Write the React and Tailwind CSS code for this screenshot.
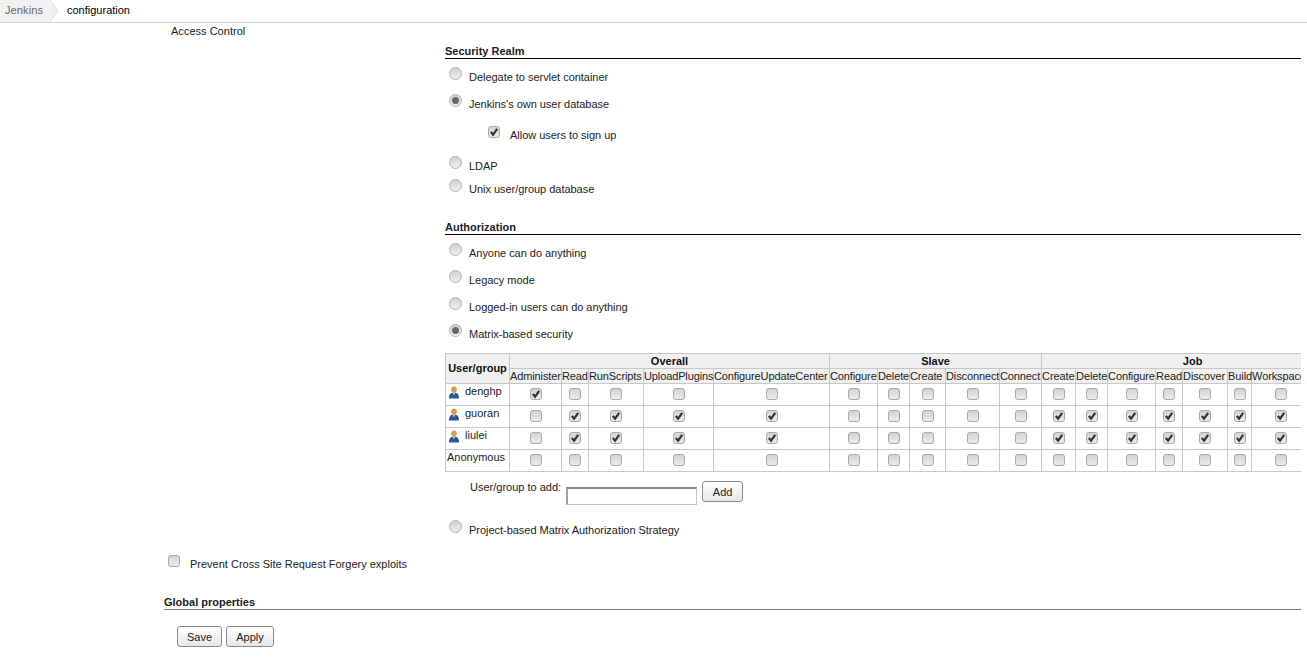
import React from 'react'

const slaveHead = ['Configure', 'Delete', 'Create', 'Disconnect', 'Connect']
// last column runs past the right edge of the page, only Job's centering depends on it
const jobHead = ['Create', 'Delete', 'Configure', 'Read', 'Discover', 'Build', 'Workspace', '']
const overallHead = ['Administer', 'Read', 'RunScripts', 'UploadPlugins', 'ConfigureUpdateCenter']
const colWidths = [64, 52, 27, 55, 70, 116, 48, 32, 36, 54, 42, 34, 32, 48, 27, 45, 24, 58, 34]

const nonAdmin = [0, 1, 1, 1, 1, 0, 0, 0, 0, 0, 1, 1, 1, 1, 1, 1, 1, 1]
const users = [
  { name: 'denghp', icon: true, perms: [1, 0, 0, 0, 0, 0, 0, 0, 0, 0, 0, 0, 0, 0, 0, 0, 0, 0] },
  { name: 'guoran', icon: true, perms: nonAdmin },
  { name: 'liulei', icon: true, perms: nonAdmin },
  { name: 'Anonymous', icon: false, perms: Array(18).fill(0) },
]

const Check = ({ checked }) => (
  <span className="inline-flex h-[12px] w-[12px] items-center justify-center rounded-[3px] border border-[#a9a9a9] bg-gradient-to-b from-[#d2d2d2] to-[#ececec]">
    {checked ? (
      <svg width="10" height="10" viewBox="0 0 11 11">
        <path d="M2 5.5 L4.5 8.5 L9 2" fill="none" stroke="#333" strokeWidth="2.4" />
      </svg>
    ) : null}
  </span>
)

const Radio = ({ checked }) => (
  <span className="mb-[7px] inline-flex h-[13px] w-[13px] items-center justify-center rounded-full border border-[#b0b0b0] bg-gradient-to-b from-[#d0d0d0] to-[#f0f0f0]">
    {checked ? <span className="h-[7px] w-[7px] rounded-full bg-[#666]" /> : null}
  </span>
)

const RadioRow = ({ label, checked, className }) => (
  <div className={`flex h-4 items-center pl-[4px] ${className}`}>
    <Radio checked={checked} />
    <span className="ml-[7px] tracking-[-0.03px]">{label}</span>
  </div>
)

const SectionTitle = ({ children, className }) => (
  <div className={`h-4 border-b border-black font-bold ${className}`}>{children}</div>
)

const UserIcon = () => (
  <svg width="10" height="13" viewBox="0 0 10 13" className="shrink-0">
    <path d="M0 12.5 C0 8 1.5 6.8 5 6.8 C8.5 6.8 10 8 10 12.5 Z" fill="#2b5797" />
    <path d="M3.8 6.8 L5 9.5 L6.2 6.8 Z" fill="#c9d4e6" />
    <ellipse cx="5" cy="3.6" rx="2.8" ry="3.2" fill="#dd9c3c" />
  </svg>
)

const Button = ({ children, className }) => (
  <button className={`h-[21px] rounded-[3px] border border-[#8a8a8a] bg-gradient-to-b from-white to-[#e6e6e6] text-[11px] text-[#222] ${className}`}>
    {children}
  </button>
)

const App = () => {
  return (
    <div className="h-[660px] overflow-hidden bg-white font-['Liberation_Sans',Arial,sans-serif] text-[11px] leading-4 text-[#222]">
      <div className="flex h-[23px] items-center border-b border-[#cfcfcf]">
        <div className="flex h-[22px] items-center">
          <span className="flex h-[22px] w-[50px] items-center bg-[#f1f1f1] pb-[2px] pl-[5px] tracking-[0.1px] text-[#666]">Jenkins</span>
          <svg width="9" height="22" viewBox="0 0 9 22" className="shrink-0">
            <path d="M0 0 L8 11 L0 22 Z" fill="#f1f1f1" />
            <path d="M0 0 L8 11 L0 22" fill="none" stroke="#dcdcdc" />
          </svg>
        </div>
        <span className="mb-[2px] ml-[8px] text-black">configuration</span>
      </div>

      <div className="w-[1301px]">
        <div className="h-4 pl-[171px] tracking-[0.02px]">Access Control</div>

        <div className="pl-[445px]">
          <SectionTitle className="mt-[4px]">Security Realm</SectionTitle>
          <RadioRow className="mt-[10px]" label="Delegate to servlet container" />
          <RadioRow className="mt-[11px]" label="Jenkins's own user database" checked />
          <div className="mt-[15px] flex h-4 items-center pl-[43px]">
            <span className="mb-[7px] inline-flex"><Check checked /></span>
            <span className="ml-[10px] tracking-[-0.03px]">Allow users to sign up</span>
          </div>
          <RadioRow className="mt-[15px]" label="LDAP" />
          <RadioRow className="mt-[7px]" label="Unix user/group database" />

          <SectionTitle className="mt-[22px]">Authorization</SectionTitle>
          <RadioRow className="mt-[10px]" label="Anyone can do anything" />
          <RadioRow className="mt-[11px]" label="Legacy mode" />
          <RadioRow className="mt-[11px]" label="Logged-in users can do anything" />
          <RadioRow className="mt-[11px]" label="Matrix-based security" checked />

          <div className="mt-[11px] overflow-hidden">
            <table className="w-[898px] table-fixed border-collapse text-center">
              <colgroup>
                {colWidths.map((w, i) => (
                  <col key={i} style={{ width: w }} />
                ))}
              </colgroup>
              <thead className="bg-[#f0f0f0]">
                <tr className="h-[15px]">
                  <th rowSpan={2} className="border border-[#c8c8c8] p-0 pb-[2px] font-bold leading-[14px] text-[#111]">User/group</th>
                  <th colSpan={5} className="border border-[#c8c8c8] p-0 font-bold leading-[14px] text-[#111]">Overall</th>
                  <th colSpan={5} className="border border-[#c8c8c8] p-0 font-bold leading-[14px] text-[#111]">Slave</th>
                  <th colSpan={8} className="border border-[#c8c8c8] p-0 font-bold leading-[14px] text-[#111]">Job</th>
                </tr>
                <tr className="h-[15px]">
                  {[...overallHead, ...slaveHead, ...jobHead].map((h, i) => (
                    <th key={i} className="whitespace-nowrap border border-[#c8c8c8] p-0 text-left font-normal leading-[14px] tracking-[-0.12px]">{h}</th>
                  ))}
                </tr>
              </thead>
              <tbody>
                {users.map((u) => (
                  <tr key={u.name} className="h-[22px]">
                    <td className="border border-[#c8c8c8] p-0 align-top">
                      <div className={`flex items-start ${u.icon ? 'gap-[6px] pl-[3px]' : 'pl-[1px]'}`}>
                        {u.icon ? <span className="pt-[2px]"><UserIcon /></span> : null}
                        <span className="-mt-[1px]">{u.name}</span>
                      </div>
                    </td>
                    {u.perms.map((p, i) => (
                      <td key={i} className="border border-[#c8c8c8] p-0 align-middle">
                        <span className="flex items-center justify-center pb-[1px]"><Check checked={p === 1} /></span>
                      </td>
                    ))}
                  </tr>
                ))}
              </tbody>
            </table>
          </div>

          <div className="mt-[7px] flex items-start pl-[25px]">
            <span>User/group to add:</span>
            <input className="ml-[5px] mt-[8px] h-[18px] w-[131px] border border-[#c4c4c4] border-t-2 border-l-2 border-t-[#8a8a8a] border-l-[#a0a0a0] bg-white" />
            <Button className="ml-[5px] mt-[2px] w-[41px]">Add</Button>
          </div>

          <RadioRow className="mt-[17px]" label="Project-based Matrix Authorization Strategy" />
        </div>

        <div className="mt-[18px] flex h-4 items-center pl-[168px]">
          <span className="mb-[7px] inline-flex"><Check /></span>
          <span className="ml-[10px]">Prevent Cross Site Request Forgery exploits</span>
        </div>

        <div className="pl-[164px]">
          <div className="mt-[22px] h-4 border-b border-[#777] font-bold">Global properties</div>
          <div className="ml-[13px] mt-[16px] flex gap-[4px]">
            <Button className="w-[45px]">Save</Button>
            <Button className="w-[48px]">Apply</Button>
          </div>
        </div>
      </div>
    </div>
  )
}

export default App
